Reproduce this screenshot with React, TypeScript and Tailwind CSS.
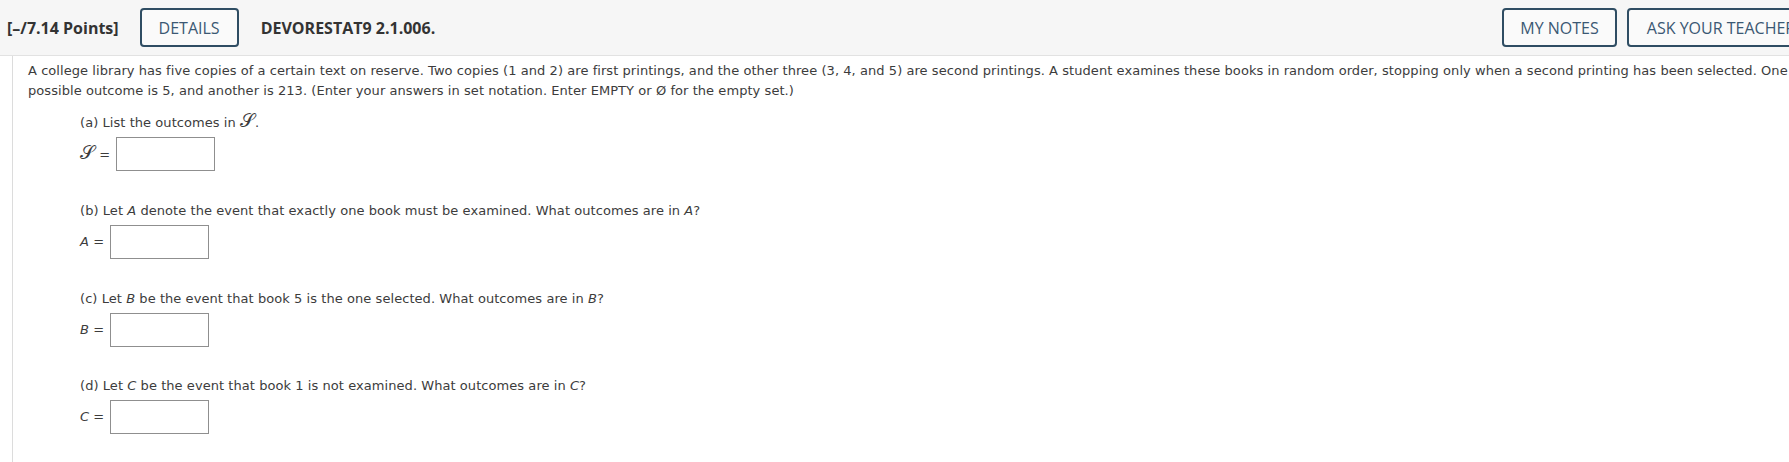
import React from "react";

const body = "font-['DejaVu_Sans',Verdana,sans-serif] text-[13px] leading-[20px] tracking-[0.06px] text-[#3c3c3c]";

function AnswerRow({ label }: { label: React.ReactNode }) {
  return (
    <div className="flex items-center gap-[6px] mt-[4px]">
      <span className="whitespace-nowrap">{label} =</span>
      <div className="w-[99px] h-[34px] border border-[#8f8f8f] bg-white" />
    </div>
  );
}

function ScriptS() {
  return <span className="font-['DejaVu_Serif',serif] not-italic text-[19px] leading-none">𝒮</span>;
}

export default function App() {
  return (
    <div className="w-[1789px] h-[462px] overflow-hidden bg-white">
      <div className="w-[1822px]">
        {/* Header */}
        <div className="h-[56px] bg-[#f6f6f6] border-b border-[#e2e2e2] flex items-center pl-[7px] pr-[7px] font-['Open_Sans',sans-serif]">
          <span className="text-[16px] font-bold text-[#333]">[–/7.14 Points]</span>
          <button className="ml-[21px] w-[99px] h-[39px] rounded-[4px] border-2 border-[#2f4d63] bg-[#fafafa] text-[16px] text-[#3b5873]">
            DETAILS
          </button>
          <span className="ml-[22px] text-[16px] font-bold text-[#333]">DEVORESTAT9 2.1.006.</span>
          <div className="ml-auto flex gap-[10px]">
            <button className="w-[115px] h-[39px] rounded-[4px] border-2 border-[#2f4d63] bg-[#fafafa] text-[16px] text-[#3b5873]">
              MY NOTES
            </button>
            <button className="w-[188px] h-[39px] rounded-[4px] border-2 border-[#2f4d63] bg-[#fafafa] text-[16px] text-[#3b5873]">
              ASK YOUR TEACHER
            </button>
          </div>
        </div>

        {/* Question */}
        <div className="ml-[12px] border-l border-[#dcdcdc] pl-[15px] pt-[5px] h-[406px]">
          <div className={body}>
            <p className="whitespace-nowrap">
              A college library has five copies of a certain text on reserve. Two copies (1 and 2) are first printings, and the other three (3, 4, and 5) are second printings. A student examines these books in random order, stopping only when a second printing has been selected. One
              <br />
              possible outcome is 5, and another is 213. (Enter your answers in set notation. Enter EMPTY or Ø for the empty set.)
            </p>

            <div className="ml-[52px]">
              <p className="mt-[10px]">
                (a) List the outcomes in <ScriptS />.
              </p>
              <AnswerRow label={<ScriptS />} />

              <p className="mt-[30px]">
                (b) Let <i>A</i> denote the event that exactly one book must be examined. What outcomes are in <i>A</i>?
              </p>
              <AnswerRow label={<i>A</i>} />

              <p className="mt-[30px]">
                (c) Let <i>B</i> be the event that book 5 is the one selected. What outcomes are in <i>B</i>?
              </p>
              <AnswerRow label={<i>B</i>} />

              <p className="mt-[29px]">
                (d) Let <i>C</i> be the event that book 1 is not examined. What outcomes are in <i>C</i>?
              </p>
              <AnswerRow label={<i>C</i>} />
            </div>
          </div>
        </div>
      </div>
    </div>
  );
}
